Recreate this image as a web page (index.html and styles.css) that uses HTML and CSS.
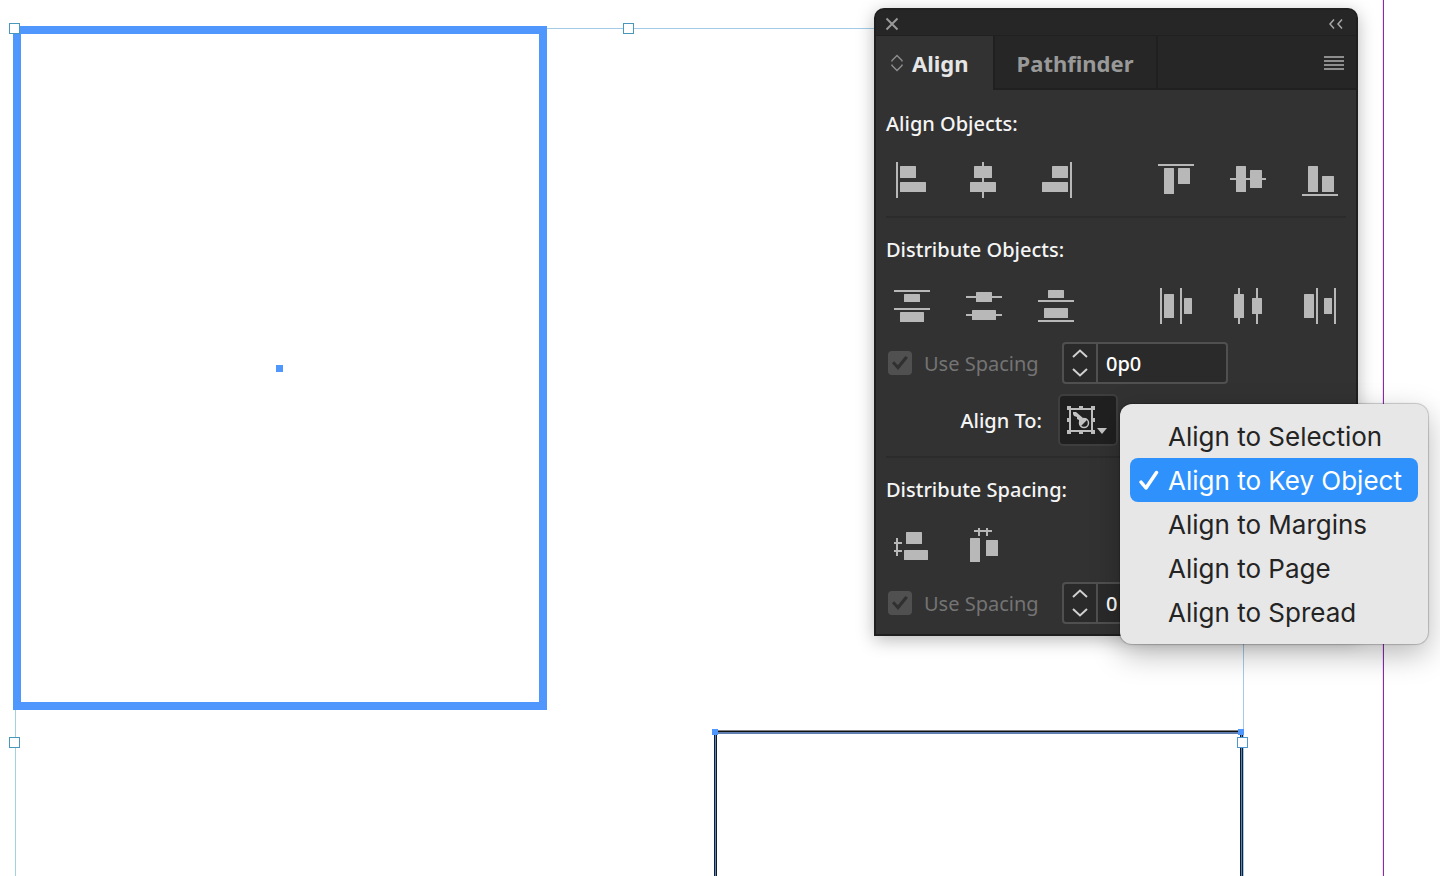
FILE: index.html
```html
<!DOCTYPE html>
<html lang="en">
<head>
<meta charset="utf-8">
<title>Align panel</title>
<link rel="stylesheet" href="styles.css">
</head>
<body>
<main class="canvas">
  <div class="guide"></div>
  <div class="bounds"></div>
  <div class="frame frame-key"></div>
  <div class="center-point"></div>
  <div class="frame frame-second"></div>
  <span class="corner corner-left"></span>
  <span class="corner corner-right"></span>
  <span class="handle handle-nw"></span>
  <span class="handle handle-n"></span>
  <span class="handle handle-w"></span>
  <span class="handle handle-e"></span>

  <section class="panel" aria-label="Align">
    <header class="titlebar">
      <button class="bare" aria-label="Close"><svg width="14" height="14" viewBox="0 0 14 14"><path d="M1.500 1.500l11 11M12.500 1.500l-11 11" stroke="#999" stroke-width="2" fill="none"/></svg></button>
      <button class="bare" aria-label="Collapse"><svg width="14" height="10" viewBox="0 0 14 10"><path d="M5 .5L1 5l4 4.500M13 .5L9 5l4 4.500" stroke="#a8a8a8" stroke-width="1.500" fill="none"/></svg></button>
    </header>
    <nav class="tabs">
      <button class="tab tab-active"><svg width="12" height="18" viewBox="0 0 12 18"><path d="M1 7.500V6.500L6 1.500l5 5v1M1 10.500v1l5 5 5-5v-1" stroke="#8c8c8c" stroke-width="1.500" fill="none"/></svg>Align</button>
      <button class="tab">Pathfinder</button>
      <button class="bare tabs-menu" aria-label="Panel menu"><svg width="20" height="14" viewBox="0 0 20 14"><path d="M0 1h20M0 5h20M0 9h20M0 13h20" stroke="#8e8e8e" stroke-width="2"/></svg></button>
    </nav>

    <div class="section">
      <h2 class="heading">Align Objects:</h2>
      <div class="tools">
        <div class="tool-group">
          <button class="tool" aria-label="Align left edges"><svg viewBox="0 0 36 36"><path d="M2 0h2v36H2z"/><rect x="6" y="4" width="16" height="12" rx=".5"/><rect x="6" y="20" width="26" height="10" rx=".5"/></svg></button>
          <button class="tool" aria-label="Align horizontal centers"><svg viewBox="0 0 36 36"><path d="M16 0h2v36h-2z"/><rect x="8" y="4" width="18" height="12" rx=".5"/><rect x="4" y="20" width="26" height="10" rx=".5"/></svg></button>
          <button class="tool" aria-label="Align right edges"><svg viewBox="0 0 36 36"><path d="M32 0h2v36h-2z"/><rect x="14" y="4" width="16" height="12" rx=".5"/><rect x="4" y="20" width="26" height="10" rx=".5"/></svg></button>
        </div>
        <div class="tool-group">
          <button class="tool" aria-label="Align top edges"><svg viewBox="0 0 36 36"><path d="M0 2h36v2H0z"/><rect x="6" y="6" width="10" height="26" rx=".5"/><rect x="20" y="6" width="12" height="16" rx=".5"/></svg></button>
          <button class="tool" aria-label="Align vertical centers"><svg viewBox="0 0 36 36"><path d="M0 16h36v2H0z"/><rect x="6" y="4" width="10" height="26" rx=".5"/><rect x="20" y="8" width="12" height="18" rx=".5"/></svg></button>
          <button class="tool" aria-label="Align bottom edges"><svg viewBox="0 0 36 36"><path d="M0 32h36v2H0z"/><rect x="6" y="4" width="10" height="26" rx=".5"/><rect x="20" y="14" width="12" height="16" rx=".5"/></svg></button>
        </div>
      </div>
    </div>

    <div class="section">
      <h2 class="heading">Distribute Objects:</h2>
      <div class="tools">
        <div class="tool-group">
          <button class="tool" aria-label="Distribute top edges"><svg viewBox="0 0 36 36"><path d="M0 2h36v2H0zM0 20h36v2H0z"/><rect x="10" y="6" width="16" height="8" rx=".5"/><rect x="6" y="24" width="24" height="10" rx=".5"/></svg></button>
          <button class="tool" aria-label="Distribute vertical centers"><svg viewBox="0 0 36 36"><path d="M0 8h36v2H0zM0 26h36v2H0z"/><rect x="10" y="4" width="16" height="10" rx=".5"/><rect x="6" y="22" width="24" height="10" rx=".5"/></svg></button>
          <button class="tool" aria-label="Distribute bottom edges"><svg viewBox="0 0 36 36"><path d="M0 12h36v2H0zM0 32h36v2H0z"/><rect x="10" y="2" width="16" height="8" rx=".5"/><rect x="6" y="20" width="24" height="10" rx=".5"/></svg></button>
        </div>
        <div class="tool-group">
          <button class="tool" aria-label="Distribute left edges"><svg viewBox="0 0 36 36"><path d="M2 0h2v36H2zM22 0h2v36h-2z"/><rect x="6" y="6" width="10" height="24" rx=".5"/><rect x="26" y="10" width="8" height="16" rx=".5"/></svg></button>
          <button class="tool" aria-label="Distribute horizontal centers"><svg viewBox="0 0 36 36"><path d="M8 0h2v36H8zM26 0h2v36h-2z"/><rect x="4" y="6" width="10" height="24" rx=".5"/><rect x="22" y="10" width="10" height="16" rx=".5"/></svg></button>
          <button class="tool" aria-label="Distribute right edges"><svg viewBox="0 0 36 36"><path d="M14 0h2v36h-2zM32 0h2v36h-2z"/><rect x="2" y="6" width="10" height="24" rx=".5"/><rect x="22" y="10" width="8" height="16" rx=".5"/></svg></button>
        </div>
      </div>
      <div class="row">
        <label class="check"><input type="checkbox" checked disabled>Use Spacing</label>
        <div class="stepper">
          <div class="stepper-buttons">
            <button class="bare" aria-label="Increase"><svg width="16" height="9" viewBox="0 0 16 9"><path d="M1 8l7-6.500L15 8" stroke="#d0d0d0" stroke-width="2" fill="none"/></svg></button>
            <button class="bare" aria-label="Decrease"><svg width="16" height="9" viewBox="0 0 16 9"><path d="M1 1l7 6.500L15 1" stroke="#d0d0d0" stroke-width="2" fill="none"/></svg></button>
          </div>
          <input class="stepper-value" type="text" value="0p0" aria-label="Distribute objects spacing">
        </div>
      </div>
      <div class="row row-align">
        <span class="row-label" id="align-to">Align To:</span>
        <button class="align-button" aria-labelledby="align-to" aria-haspopup="menu" aria-expanded="true">
          <svg width="42" height="28" viewBox="0 0 42 28">
            <path d="M3 3h22v22H3z" fill="none" stroke="#bdbdbd" stroke-width="2"/>
            <path d="M0 0h4v4H0zM12 0h4v4h-4zM24 0h4v4h-4zM0 12h4v4H0zM24 12h4v4h-4zM0 24h4v4H0zM12 24h4v4h-4zM24 24h4v4h-4z" fill="#bdbdbd"/>
            <path d="M6 6h3l7 6h3l2 3-6 6-3-3v-4l-2-1v-2l-3-1-1-2z" fill="#c4c4c4"/>
            <circle cx="17" cy="17" r="4.500" fill="#222" stroke="#c4c4c4" stroke-width="1.500"/>
            <path d="M13.800 20.200A4.500 4.500 0 0 1 20.200 13.800z" fill="#c4c4c4"/>
            <path d="M30 22h10l-5 6z" fill="#c4c4c4"/>
          </svg>
        </button>
      </div>
    </div>

    <div class="section">
      <h2 class="heading">Distribute Spacing:</h2>
      <div class="tools">
        <div class="tool-group">
          <button class="tool" aria-label="Distribute vertical space"><svg viewBox="0 0 36 36"><path d="M2 10h2v18H2zM0 14h8v2H0zM0 22h8v2H0z"/><rect x="12" y="4" width="16" height="12" rx=".5"/><rect x="10" y="22" width="24" height="10" rx=".5"/></svg></button>
          <button class="tool" aria-label="Distribute horizontal space"><svg viewBox="0 0 36 36"><path d="M8 2h18v2H8zM12 0h2v8h-2zM20 0h2v8h-2z"/><rect x="4" y="10" width="10" height="24" rx=".5"/><rect x="20" y="12" width="12" height="16" rx=".5"/></svg></button>
        </div>
      </div>
      <div class="row">
        <label class="check"><input type="checkbox" checked disabled>Use Spacing</label>
        <div class="stepper">
          <div class="stepper-buttons">
            <button class="bare" aria-label="Increase"><svg width="16" height="9" viewBox="0 0 16 9"><path d="M1 8l7-6.500L15 8" stroke="#d0d0d0" stroke-width="2" fill="none"/></svg></button>
            <button class="bare" aria-label="Decrease"><svg width="16" height="9" viewBox="0 0 16 9"><path d="M1 1l7 6.500L15 1" stroke="#d0d0d0" stroke-width="2" fill="none"/></svg></button>
          </div>
          <input class="stepper-value" type="text" value="0" aria-label="Distribute spacing amount">
        </div>
      </div>
    </div>
  </section>

  <div class="menu" role="menu" aria-labelledby="align-to">
    <button class="menu-item" role="menuitemradio" aria-checked="false">Align to Selection</button>
    <button class="menu-item menu-item-active" role="menuitemradio" aria-checked="true"><svg width="20" height="20" viewBox="0 0 20 20"><path d="M2 12l5 6L17.500 2.500" fill="none" stroke="#fff" stroke-width="3.500" stroke-linecap="round" stroke-linejoin="round"/></svg>Align to Key Object</button>
    <button class="menu-item" role="menuitemradio" aria-checked="false">Align to Margins</button>
    <button class="menu-item" role="menuitemradio" aria-checked="false">Align to Page</button>
    <button class="menu-item" role="menuitemradio" aria-checked="false">Align to Spread</button>
  </div>
</main>
</body>
</html>
```

FILE: styles.css
```css
* { box-sizing: border-box; }

body {
  margin: 0;
  background: #fff;
  font-family: "Noto Sans", sans-serif;
}

button, input {
  margin: 0;
  padding: 0;
  border: 0;
  background: none;
  color: inherit;
  font: inherit;
}

svg { display: block; flex: none; }

/* Pasteboard */
.canvas {
  position: relative;
  min-height: 100vh;
  overflow: hidden;
}

.guide {
  position: absolute;
  top: 0;
  bottom: 0;
  left: 1382px;
  border-left: 1px solid #f6e4fa;
  border-right: 1px solid #8030a8;
}

.bounds {
  position: absolute;
  top: 28px;
  bottom: 0;
  left: 15px;
  width: 1229px;
  border: 1px solid #a3cbe8;
  border-left-color: #a3d3da;
  border-bottom: 0;
}

.frame { position: absolute; }

.frame-key {
  top: 26px;
  left: 13px;
  width: 534px;
  height: 684px;
  border: 8px solid #4f97fd;
}

.center-point {
  position: absolute;
  top: 365px;
  left: 276px;
  width: 7px;
  height: 7px;
  background: #4f97fd;
}

.frame-second {
  top: 730px;
  bottom: 0;
  left: 714px;
  width: 529px;
  border: 1px solid #0b2140;
  border-top-color: #808080;
  border-bottom: 0;
}

.frame-second::before {
  content: "";
  position: absolute;
  inset: 0;
  border: 1px solid #6484ad;
  border-top-color: #111;
  border-bottom: 0;
}

.frame-second::after {
  content: "";
  position: absolute;
  inset: 1px 1px 0;
  border: 1px solid #111a28;
  border-top: 2px solid #5f7fb0;
  border-bottom: 0;
}

.corner {
  position: absolute;
  top: 729px;
  width: 6px;
  height: 6px;
  background: #4f97fd;
}

.corner-left { left: 712px; }
.corner-right { left: 1238px; }

.handle {
  position: absolute;
  width: 11px;
  height: 11px;
  border: 1px solid #4a97bd;
  background: #fff;
}

.handle-nw { top: 23px; left: 9px; }
.handle-n { top: 23px; left: 623px; }
.handle-w { top: 737px; left: 9px; }
.handle-e { top: 737px; left: 1237px; border-color: #4f97cf; }

/* Floating panel */
.panel {
  position: absolute;
  top: 8px;
  left: 874px;
  width: 484px;
  border: 2px solid #1f1f1f;
  border-radius: 10px 10px 0 0;
  background: #323232;
  color: #f5f5f5;
  font-size: 20px;
  box-shadow: 0 4px 18px rgba(0, 0, 0, .28);
}

.bare { display: flex; align-items: center; justify-content: center; }

.titlebar {
  display: flex;
  align-items: center;
  justify-content: space-between;
  height: 26px;
  padding: 2px 13px 0 9px;
  border-bottom: 1px solid #202020;
  border-radius: 8px 8px 0 0;
  background: #262626;
}

.tabs {
  display: flex;
  height: 54px;
  background: #262626;
}

.tab {
  display: flex;
  align-items: center;
  gap: 9px;
  padding: 2px 22px 0;
  border-right: 2px solid #202020;
  border-bottom: 2px solid #202020;
  color: #999;
  font-size: 22px;
  font-weight: 700;
}

.tab-active {
  padding: 0 24px 0 15px;
  border-bottom: 0;
  background: #323232;
  color: #e6e6e6;
}

.tabs-menu {
  flex: 1;
  justify-content: flex-end;
  padding: 2px 12px 0 0;
  border-bottom: 2px solid #202020;
}

.section { padding: 20px 0 12px; }

.section + .section { padding: 0 0 10px; }

.section + .section::before {
  content: "";
  display: block;
  height: 2px;
  margin: 0 10px 18px;
  background: #2b2b2b;
}

.heading {
  margin: 0 10px 18px;
  font-size: 20px;
  font-weight: 500;
  line-height: 28px;
}

.tools { display: flex; justify-content: space-between; }
.tool-group { display: flex; }

.tool {
  display: flex;
  align-items: center;
  justify-content: center;
  width: 72px;
  height: 48px;
}

.tool svg { width: 36px; height: 36px; fill: #b8b8b8; }

.row {
  display: grid;
  grid-template-columns: 154px 166px;
  align-items: center;
  gap: 20px;
  margin: 12px 12px 0;
}

.row-align { gap: 16px; margin-top: 10px; }
.row-label { text-align: right; font-weight: 500; }

.check {
  display: flex;
  align-items: center;
  gap: 12px;
  color: #747474;
  white-space: nowrap;
}

.check input {
  appearance: none;
  flex: none;
  display: grid;
  place-items: center;
  width: 24px;
  height: 24px;
  border-radius: 4px;
  background: #505050;
}

.check input::before {
  content: "";
  width: 16px;
  height: 14px;
  background: #303030;
  clip-path: polygon(0 52%, 14% 38%, 36% 66%, 84% 0, 100% 12%, 38% 100%);
}

.stepper {
  display: flex;
  height: 42px;
  border: 2px solid #505050;
  border-radius: 4px;
  background: #2a2a2a;
}

.stepper-buttons {
  display: grid;
  flex: none;
  width: 34px;
  border-right: 2px solid #505050;
}

.stepper-value {
  flex: 1;
  min-width: 0;
  padding-left: 8px;
  color: #fff;
  font-weight: 500;
}

.align-button {
  display: flex;
  align-items: center;
  justify-content: center;
  width: 60px;
  height: 52px;
  border: 2px solid #3e3e3e;
  border-radius: 5px;
  background: #202020;
}

/* Popup menu */
.menu {
  position: absolute;
  top: 404px;
  left: 1120px;
  display: flex;
  flex-direction: column;
  width: 308px;
  padding: 10px;
  border-radius: 12px;
  background: #e7e7e7;
  box-shadow: 0 0 1px 1px rgba(0, 0, 0, .2), 0 10px 30px rgba(0, 0, 0, .28);
  color: #242424;
  font-family: Inter, sans-serif;
  font-size: 26px;
}

.menu-item {
  display: flex;
  align-items: center;
  height: 44px;
  padding-left: 38px;
  border-radius: 8px;
  text-align: left;
  white-space: nowrap;
}

.menu-item-active {
  gap: 9px;
  padding-left: 9px;
  background: #2f91fb;
  color: #fff;
}
```
